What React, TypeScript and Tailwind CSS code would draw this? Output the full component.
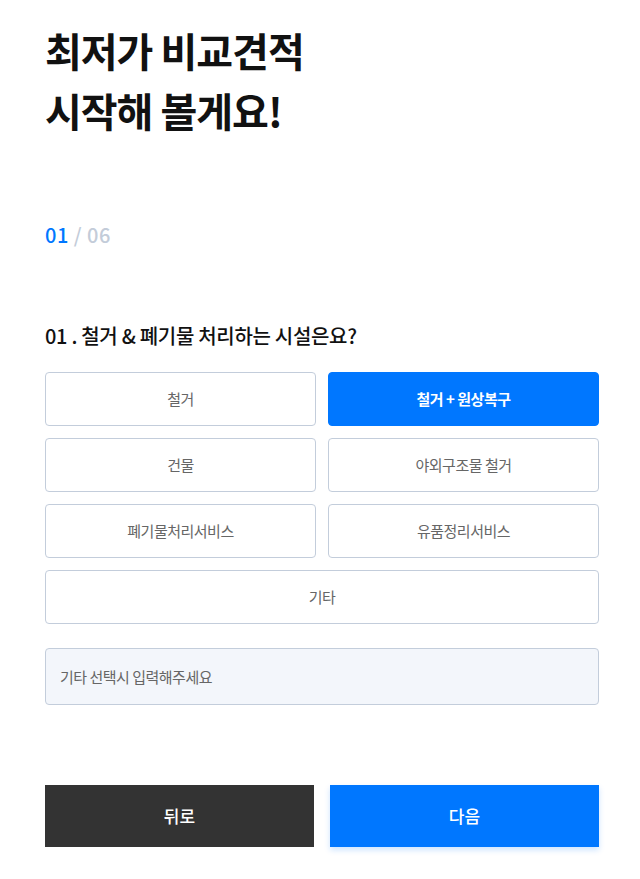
import React, { useState } from 'react';

const options = [
  { label: '철거', full: false },
  { label: '철거 + 원상복구', full: false },
  { label: '건물', full: false },
  { label: '야외구조물 철거', full: false },
  { label: '폐기물처리서비스', full: false },
  { label: '유품정리서비스', full: false },
  { label: '기타', full: true },
];

export default function App() {
  const [selected, setSelected] = useState('철거 + 원상복구');
  const [etc, setEtc] = useState('');

  return (
    <div
      className="bg-white pl-[45px] pr-[41px] pt-[20px] pb-6 text-[#111]"
      style={{ fontFamily: '"Noto Sans CJK KR", "Noto Sans", sans-serif' }}
    >
      <h1 className="text-[40px] font-bold leading-[60px] tracking-[-1px] text-[#111]">
        최저가 비교견적
        <br />
        시작해 볼게요!
      </h1>

      <div className="mt-[81px] text-[20px] font-medium leading-[28px] tracking-[0.5px]">
        <span className="text-[#0077ff]">01</span>
        <span className="text-[#c3ccd9]"> / 06</span>
      </div>

      <h2 className="mt-[73px] text-[20px] font-medium leading-[28px] tracking-[-0.3px]">
        01 . 철거 &amp; 폐기물 처리하는 시설은요?
      </h2>

      <div className="mt-[22px] grid grid-cols-2 gap-3">
        {options.map((o) => {
          const active = selected === o.label;
          return (
            <button
              key={o.label}
              onClick={() => setSelected(o.label)}
              className={`h-[54px] rounded-[4px] border text-[15px] tracking-[-0.5px] ${
                o.full ? 'col-span-2' : ''
              } ${
                active
                  ? 'border-[#0077ff] bg-[#0077ff] font-bold text-white'
                  : 'border-[#c3cddb] bg-white text-[#666]'
              }`}
            >
              {o.label}
            </button>
          );
        })}
      </div>

      <input
        value={etc}
        onChange={(e) => setEtc(e.target.value)}
        placeholder="기타 선택시 입력해주세요"
        className="mt-6 h-[57px] w-full rounded-[4px] border border-[#c3cddb] bg-[#f3f6fb] px-[14px] text-[15px] tracking-[-0.5px] text-[#333] outline-none placeholder:text-[#666]"
      />

      <div className="mt-20 flex gap-4">
        <button className="h-[62px] flex-1 bg-[#333333] text-[17px] font-medium text-white">
          뒤로
        </button>
        <button className="h-[62px] flex-1 bg-[#0077ff] text-[17px] font-medium text-white shadow-[0_3px_6px_rgba(0,119,255,0.2)]">
          다음
        </button>
      </div>
    </div>
  );
}
